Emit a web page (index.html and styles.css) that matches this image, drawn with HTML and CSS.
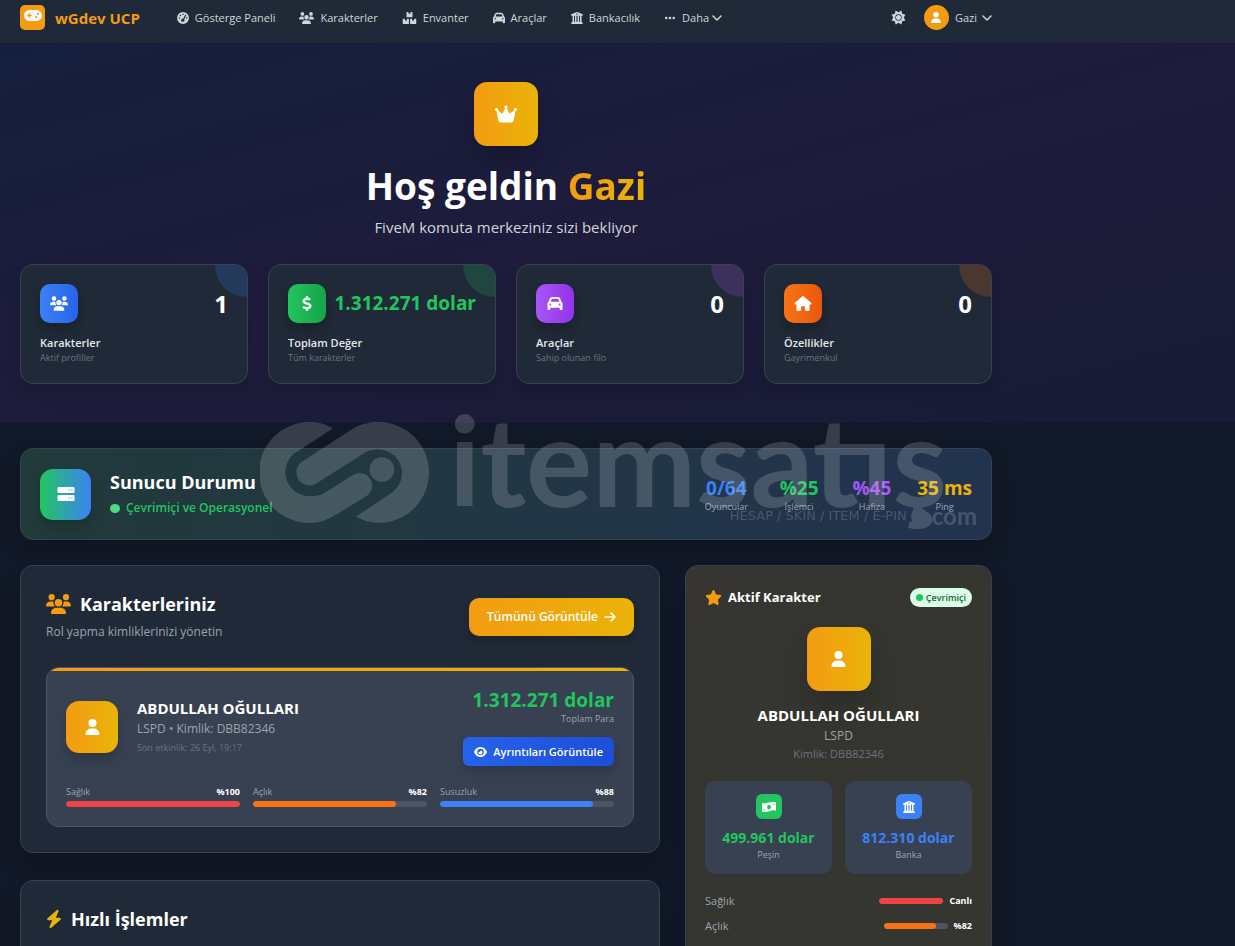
FILE: index.html
```html
<!DOCTYPE html>
<html lang="tr">
<head>
    <meta charset="UTF-8">
    <meta name="viewport" content="width=device-width, initial-scale=1.0">
    <title>wGdev UCP</title>
    <link rel="stylesheet" href="styles.css">
</head>
<body>
    <svg class="sprite" aria-hidden="true">
        <symbol id="i-user" viewBox="0 0 448 512"><path d="M224 256A128 128 0 1 0 224 0a128 128 0 1 0 0 256zm-45.7 48C79.8 304 0 383.8 0 482.3C0 498.7 13.3 512 29.7 512H418.3c16.4 0 29.7-13.3 29.7-29.7C448 383.8 368.2 304 269.7 304H178.3z"/></symbol>
        <symbol id="i-users" viewBox="0 0 640 512"><path d="M144 0a80 80 0 1 1 0 160A80 80 0 1 1 144 0zM512 0a80 80 0 1 1 0 160A80 80 0 1 1 512 0zM0 298.7C0 239.8 47.8 192 106.7 192h42.7c15.9 0 31 3.5 44.6 9.7c-1.3 7.2-1.9 14.7-1.9 22.3c0 38.2 16.8 72.5 43.3 96c-.2 0-.4 0-.7 0H21.3C9.6 320 0 310.4 0 298.7zM405.3 320c-.2 0-.4 0-.7 0c26.6-23.5 43.3-57.8 43.3-96c0-7.6-.7-15-1.9-22.3c13.6-6.3 28.7-9.7 44.6-9.7h42.7C592.2 192 640 239.8 640 298.7c0 11.8-9.6 21.3-21.3 21.3H405.3zM224 224a96 96 0 1 1 192 0 96 96 0 1 1 -192 0zM128 485.3C128 411.7 187.7 352 261.3 352H378.7C452.3 352 512 411.7 512 485.3c0 14.7-11.9 26.7-26.7 26.7H154.7c-14.7 0-26.7-11.9-26.7-26.7z"/></symbol>
        <symbol id="i-crown" viewBox="0 0 576 512"><path d="M309 106c11.4-7 19-19.7 19-34c0-22.1-17.9-40-40-40s-40 17.9-40 40c0 14.4 7.6 27 19 34L209.7 220.6c-9.1 18.2-32.7 23.4-48.6 10.7L72 160c5-6.7 8-15 8-24c0-22.1-17.9-40-40-40S0 113.9 0 136s17.9 40 40 40c.2 0 .5 0 .7 0L86.4 427.4c5.5 30.4 32 52.6 63 52.6H426.6c30.9 0 57.4-22.1 63-52.6L535.3 176c.2 0 .5 0 .7 0c22.1 0 40-17.9 40-40s-17.9-40-40-40s-40 17.9-40 40c0 9 3 17.3 8 24l-89.1 71.3c-15.9 12.7-39.5 7.5-48.6-10.7L309 106z"/></symbol>
        <symbol id="i-home" viewBox="0 0 576 512"><path d="M575.8 255.5c0 18-15 32.1-32 32.1h-32l.7 160.2V472c0 22.1-17.9 40-40 40H392c-22.1 0-40-17.9-40-40V384c0-17.7-14.3-32-32-32H256c-17.7 0-32 14.3-32 32v88c0 22.1-17.9 40-40 40H104c-22.1 0-40-17.9-40-40V287.6H32c-18 0-32-14-32-32.1c0-9 3-17 10-24L266.4 8c7-7 15-8 22-8s15 2 21 7L564.8 231.5c8 7 12 15 11 24z"/></symbol>
        <symbol id="i-car" viewBox="0 0 512 512"><path fill-rule="evenodd" d="M135.2 117.4L109.1 192H402.9l-26.1-74.6C372.3 104.6 360.2 96 346.6 96H165.4c-13.6 0-25.7 8.6-30.2 21.4zM39.6 196.8L74.8 96.3C88.3 57.8 124.6 32 165.4 32H346.6c40.8 0 77.1 25.8 90.6 64.3l35.2 100.5c23.2 9.6 39.6 32.5 39.6 59.2V448c0 17.7-14.3 32-32 32H448c-17.7 0-32-14.3-32-32V400H96v48c0 17.7-14.3 32-32 32H32c-17.7 0-32-14.3-32-32V256c0-26.7 16.4-49.6 39.6-59.2zM128 288a32 32 0 1 0 -64 0 32 32 0 1 0 64 0zm288 32a32 32 0 1 0 0-64 32 32 0 1 0 0 64z"/></symbol>
        <symbol id="i-star" viewBox="0 0 576 512"><path d="M316.9 18C311.6 7 300.4 0 288.1 0s-23.4 7-28.8 18L195 150.3 51.4 171.5c-12 1.8-22 10.2-25.7 21.7s-.7 24.2 7.9 32.7L137.8 329 113.2 474.7c-2 12 3 24.2 12.9 31.3s23 8 33.8 2.3l128.3-68.5 128.3 68.5c10.8 5.7 23.9 4.9 33.8-2.3s14.9-19.3 12.9-31.3L438.5 329 542.7 225.9c8.6-8.5 11.7-21.2 7.9-32.7s-13.7-19.9-25.7-21.7L381.2 150.3 316.9 18z"/></symbol>
        <symbol id="i-bolt" viewBox="0 0 448 512"><path d="M349.4 44.6c5.9-13.7 1.5-29.7-10.6-38.5s-28.6-8-39.9 1.8l-256 224c-10 8.8-13.6 22.9-8.9 35.3S50.7 288 64 288H175.5L98.6 467.4c-5.9 13.7-1.5 29.7 10.6 38.5s28.6 8 39.9-1.8l256-224c10-8.8 13.6-22.9 8.9-35.3s-16.6-20.7-30-20.7H272.5L349.4 44.6z"/></symbol>
        <symbol id="i-dollar" viewBox="0 0 320 512"><path stroke="currentColor" stroke-width="16" d="M160 0c17.7 0 32 14.3 32 32V67.7c1.6 .2 3.1 .4 4.7 .7c.4 .1 .7 .1 1.1 .2l48 8.8c17.4 3.2 28.9 19.9 25.7 37.2s-19.9 28.9-37.2 25.7l-47.5-8.7c-31.3-4.6-58.9-1.5-78.3 6.2s-27.2 18.3-29 28.1c-2 10.7-.5 16.7 1.2 20.4c1.8 3.9 5.5 8.3 12.8 13.2c16.3 10.7 41.3 17.7 73.7 26.3l2.9 .8c28.6 7.6 63.6 16.8 89.6 33.8c14.2 9.3 27.6 21.9 35.9 39.5c8.5 17.9 10.3 37.9 6.4 59.2c-6.9 38-33.1 63.4-65.6 76.7c-13.7 5.6-28.6 9.2-44.4 11V480c0 17.7-14.3 32-32 32s-32-14.3-32-32V445.1l-1.5-.2c-24.4-3.8-64.5-14.3-91.5-26.3c-16.1-7.2-23.4-26.1-16.2-42.2s26.1-23.4 42.2-16.2c20.9 9.3 55.3 18.5 75.2 21.6c31.9 4.7 58.2 2 76-5.3c16.9-6.9 24.6-16.9 26.8-28.9c1.9-10.6 .4-16.7-1.3-20.4c-1.9-4-5.6-8.4-13-13.3c-16.4-10.7-41.5-17.7-74-26.3l-2.8-.7C119.4 279.3 84.4 270 58.4 253c-14.2-9.3-27.5-22-35.8-39.6c-8.4-17.9-10.1-37.9-6.1-59.2C23.7 116 52.3 91.2 84.8 78.3c13.3-5.3 27.9-8.9 43.2-11V32c0-17.7 14.3-32 32-32z"/></symbol>
        <symbol id="i-gauge" viewBox="0 0 512 512"><path fill-rule="evenodd" d="M0 256a256 256 0 1 1 512 0A256 256 0 1 1 0 256zM288 96a32 32 0 1 0-64 0 32 32 0 1 0 64 0zM176 144a32 32 0 1 0-64 0 32 32 0 1 0 64 0zM128 256a32 32 0 1 0-64 0 32 32 0 1 0 64 0zM448 256a32 32 0 1 0-64 0 32 32 0 1 0 64 0zM256 416a64 64 0 0 0 52-101L391 145a24 24 0 0 0-43-21L265 293a64 64 0 1 0-9 123z"/></symbol>
        <symbol id="i-boxes" viewBox="0 0 576 512"><path d="M160 24a24 24 0 0 1 24-24h62v84l42-18 42 18V0h62a24 24 0 0 1 24 24v176a24 24 0 0 1-24 24H184a24 24 0 0 1-24-24zM0 312a24 24 0 0 1 24-24h70v84l42-18 42 18v-84h62a24 24 0 0 1 24 24v176a24 24 0 0 1-24 24H24a24 24 0 0 1-24-24zM312 312a24 24 0 0 1 24-24h62v84l42-18 42 18v-84h70a24 24 0 0 1 24 24v176a24 24 0 0 1-24 24H336a24 24 0 0 1-24-24z"/></symbol>
        <symbol id="i-bank" viewBox="0 0 512 512"><path fill-rule="evenodd" d="M240 4a36 36 0 0 1 32 0l224 96c22 10 18 60-8 60H24c-26 0-30-50-8-60zM256 56a32 32 0 1 0 0 64 32 32 0 1 0 0-64zM64 160h64v256h40V160h64v256h48V160h64v256h40V160h64v260l48 34c22 16 12 58-18 58H34c-30 0-40-42-18-58l48-34z"/></symbol>
        <symbol id="i-dots" viewBox="0 0 448 512"><path d="M8 256a56 56 0 1 1 112 0A56 56 0 1 1 8 256zm160 0a56 56 0 1 1 112 0 56 56 0 1 1-112 0zm216-56a56 56 0 1 1 0 112 56 56 0 1 1 0-112z"/></symbol>
        <symbol id="i-down" viewBox="0 0 10 10"><path d="M1 3l4 4 4-4" fill="none" stroke="currentColor" stroke-width="1.5" stroke-linecap="round" stroke-linejoin="round"/></symbol>
        <symbol id="i-arrow" viewBox="0 0 12 12"><path d="M1 6h10M7 2l4 4-4 4" fill="none" stroke="currentColor" stroke-width="1.6" stroke-linecap="round" stroke-linejoin="round"/></symbol>
        <symbol id="i-sun" viewBox="0 0 24 24"><path fill-rule="evenodd" d="M16.600 .9l1.300 5.200 5.200 1.300L20.400 12l2.700 4.600-5.200 1.300-1.300 5.200L12 20.400l-4.600 2.700-1.300-5.200-5.200-1.300L3.600 12 .9 7.400l5.200-1.300L7.400 .9 12 3.600zM12 6.900a5.100 5.100 0 1 0 0 10.200 5.100 5.100 0 1 0 0-10.200zm0 1.100a4 4 0 1 1 0 8 4 4 0 1 1 0-8z"/></symbol>
        <symbol id="i-eye" viewBox="0 0 576 512"><path fill-rule="evenodd" d="M288 32c-81 0-146 37-193 80.600C48 156 17 208 3 243.700a32 32 0 0 0 0 24.600C17 304 48 356 95 399.400 142 443 207 480 288 480s146-37 193-80.600c47-43.400 78-95.400 92-131.100a32 32 0 0 0 0-24.600c-14-35.700-45-87.700-92-131.100C434 69 369 32 288 32zM144 256a144 144 0 1 1 288 0 144 144 0 1 1-288 0zm144-64c0 35-29 64-64 64-7 0-14-1-20-3a86 86 0 1 0 81-61z"/></symbol>
        <symbol id="i-server" viewBox="0 0 18 16"><path d="M1.500 1h15a1 1 0 0 1 1 1v4a1 1 0 0 1-1 1h-15a1 1 0 0 1-1-1V2a1 1 0 0 1 1-1zM1.500 9h15a1 1 0 0 1 1 1v4a1 1 0 0 1-1 1h-15a1 1 0 0 1-1-1v-4a1 1 0 0 1 1-1z"/><path fill="#a9d5e6" d="M11.500 3h1.500v2h-1.500zM14 3h1.500v2H14zM11.500 11h1.500v2h-1.500zM14 11h1.500v2H14z"/></symbol>
        <symbol id="i-gamepad" viewBox="0 0 640 384"><path fill-rule="evenodd" d="M192 0h256a192 192 0 0 1 0 384H192A192 192 0 0 1 192 0zM168 112v56h-56v48h56v56h48v-56h56v-48h-56v-56zM432 208a40 40 0 1 0 0 80 40 40 0 1 0 0-80zM496 96a40 40 0 1 0 0 80 40 40 0 1 0 0-80z"/></symbol>
        <symbol id="i-money" viewBox="0 0 576 448"><path fill-rule="evenodd" d="M0 60c70 24 120 20 190 0S360-14 576 30v350c-80-24-130-24-200 2S190 448 0 408zM288 128c-45 0-80 42-80 96s35 96 80 96 80-42 80-96-35-96-80-96zM60 310v50h60c0-30-26-50-60-50zM516 138V88h-60c0 30 26 50 60 50z"/></symbol>
    </svg>

    <nav class="navbar">
        <div class="container navbar-inner">
            <a href="#" class="brand">
                <span class="brand-icon"><svg><use href="#i-gamepad"/></svg></span>
                wGdev UCP
            </a>
            <div class="nav-links">
                <a href="#"><svg class="icon"><use href="#i-gauge"/></svg>Gösterge Paneli</a>
                <a href="#"><svg class="icon icon-wide"><use href="#i-users"/></svg>Karakterler</a>
                <a href="#"><svg class="icon icon-wide"><use href="#i-boxes"/></svg>Envanter</a>
                <a href="#"><svg class="icon"><use href="#i-car"/></svg>Araçlar</a>
                <a href="#"><svg class="icon"><use href="#i-bank"/></svg>Bankacılık</a>
                <button type="button"><svg class="icon"><use href="#i-dots"/></svg>Daha<svg class="chevron"><use href="#i-down"/></svg></button>
            </div>
            <div class="nav-right">
                <button type="button" class="theme-toggle" aria-label="Tema"><svg><use href="#i-sun"/></svg></button>
                <button type="button" class="user-menu">
                    <span class="user-avatar"><svg><use href="#i-user"/></svg></span>
                    Gazi
                    <svg class="chevron"><use href="#i-down"/></svg>
                </button>
            </div>
        </div>
    </nav>

    <header class="hero">
        <div class="container">
            <div class="avatar avatar-lg"><svg class="crown"><use href="#i-crown"/></svg></div>
            <h1>Hoş geldin <span class="gradient-text">Gazi</span></h1>
            <p class="subtitle">FiveM komuta merkeziniz sizi bekliyor</p>
            <div class="stats">
                <div class="stat-card blue">
                    <div class="stat-top">
                        <span class="stat-icon"><svg><use href="#i-users"/></svg></span>
                        <span class="stat-value">1</span>
                    </div>
                    <h3>Karakterler</h3>
                    <p>Aktif profiller</p>
                </div>
                <div class="stat-card green">
                    <div class="stat-top">
                        <span class="stat-icon"><svg><use href="#i-dollar"/></svg></span>
                        <span class="stat-value money">1.312.271 dolar</span>
                    </div>
                    <h3>Toplam Değer</h3>
                    <p>Tüm karakterler</p>
                </div>
                <div class="stat-card purple">
                    <div class="stat-top">
                        <span class="stat-icon"><svg><use href="#i-car"/></svg></span>
                        <span class="stat-value">0</span>
                    </div>
                    <h3>Araçlar</h3>
                    <p>Sahip olunan filo</p>
                </div>
                <div class="stat-card orange">
                    <div class="stat-top">
                        <span class="stat-icon"><svg><use href="#i-home"/></svg></span>
                        <span class="stat-value">0</span>
                    </div>
                    <h3>Özellikler</h3>
                    <p>Gayrimenkul</p>
                </div>
            </div>
        </div>
    </header>

    <main class="container">
        <section class="server">
            <div class="server-icon"><svg><use href="#i-server"/></svg></div>
            <div class="server-info">
                <h2>Sunucu Durumu</h2>
                <p><span class="dot"></span>Çevrimiçi ve Operasyonel</p>
            </div>
            <div class="server-stats">
                <div><strong class="c-blue">0/64</strong><span>Oyuncular</span></div>
                <div><strong class="c-green">%25</strong><span>İşlemci</span></div>
                <div><strong class="c-purple">%45</strong><span>Hafıza</span></div>
                <div><strong class="c-yellow">35 ms</strong><span>Ping</span></div>
            </div>
            <div class="watermark" aria-hidden="true">
                <svg class="wm-logo" viewBox="0 0 506 302">
                    <path d="M218 19C195 5 172 0 148 0a151 151 0 0 0 0 302c37 0 57-12 82-26l88-54a37 37 0 0 0-38-64l-90 56c-15 7-30 8-42 8a72 72 0 0 1-33-136z"/>
                    <path d="M288 283c22 14 47 19 67 19a151 151 0 0 0 0-302c-25 0-55 5-85 25L128 117a38 38 0 0 0 40 67l152-96c10-5 25-6 35-6a71 71 0 0 1 40 129z"/>
                    <circle cx="365" cy="142" r="37"/>
                </svg>
                <div class="wm-text">
                    <span class="wm-name">itemsatış</span>
                    <span class="wm-line"><span class="wm-tag">HESAP / SKİN / ITEM / E-PIN</span><span class="wm-dot"></span><span class="wm-com">com</span></span>
                </div>
            </div>
        </section>

        <div class="columns">
            <div class="main-col">
                <section class="card">
                    <div class="card-header">
                        <div>
                            <h2><svg class="h-icon"><use href="#i-users"/></svg>Karakterleriniz</h2>
                            <p>Rol yapma kimliklerinizi yönetin</p>
                        </div>
                        <a href="#" class="btn btn-gold">Tümünü Görüntüle<svg><use href="#i-arrow"/></svg></a>
                    </div>
                    <article class="character">
                        <div class="character-top">
                            <div class="avatar"><svg class="user"><use href="#i-user"/></svg></div>
                            <div class="character-info">
                                <h3>ABDULLAH OĞULLARI</h3>
                                <p>LSPD • Kimlik: DBB82346</p>
                                <small>Son etkinlik: 26 Eyl, 19:17</small>
                            </div>
                            <div class="character-money">
                                <strong>1.312.271 dolar</strong>
                                <span>Toplam Para</span>
                                <a href="#" class="btn btn-blue"><svg><use href="#i-eye"/></svg>Ayrıntıları Görüntüle</a>
                            </div>
                        </div>
                        <div class="needs">
                            <div>
                                <div class="need-label"><span>Sağlık</span><b>%100</b></div>
                                <div class="bar"><div class="fill fill-red" style="width: 100%"></div></div>
                            </div>
                            <div>
                                <div class="need-label"><span>Açlık</span><b>%82</b></div>
                                <div class="bar"><div class="fill fill-orange" style="width: 82%"></div></div>
                            </div>
                            <div>
                                <div class="need-label"><span>Susuzluk</span><b>%88</b></div>
                                <div class="bar"><div class="fill fill-blue" style="width: 88%"></div></div>
                            </div>
                        </div>
                    </article>
                </section>

                <section class="card quick">
                    <h2><svg class="h-bolt"><use href="#i-bolt"/></svg>Hızlı İşlemler</h2>
                </section>
            </div>

            <aside class="active-card">
                <div class="active-header">
                    <h2><svg><use href="#i-star"/></svg>Aktif Karakter</h2>
                    <span class="badge">Çevrimiçi</span>
                </div>
                <div class="avatar avatar-lg"><svg class="user"><use href="#i-user"/></svg></div>
                <h3>ABDULLAH OĞULLARI</h3>
                <p class="job">LSPD</p>
                <p class="cid">Kimlik: DBB82346</p>
                <div class="wallets">
                    <div class="wallet">
                        <span class="wallet-icon bg-green"><svg><use href="#i-money"/></svg></span>
                        <strong class="c-green">499.961 dolar</strong>
                        <span>Peşin</span>
                    </div>
                    <div class="wallet">
                        <span class="wallet-icon bg-blue"><svg><use href="#i-bank"/></svg></span>
                        <strong class="c-blue">812.310 dolar</strong>
                        <span>Banka</span>
                    </div>
                </div>
                <div class="vital">
                    <span>Sağlık</span>
                    <div class="bar"><div class="fill fill-red" style="width: 100%"></div></div>
                    <b>Canlı</b>
                </div>
                <div class="vital">
                    <span>Açlık</span>
                    <div class="bar"><div class="fill fill-orange" style="width: 82%"></div></div>
                    <b>%82</b>
                </div>
            </aside>
        </div>
    </main>
</body>
</html>
```

FILE: styles.css
```css
* {
    box-sizing: border-box;
    margin: 0;
    padding: 0;
}

body {
    font-family: "Open Sans", "Noto Sans", sans-serif;
    font-size: 12px;
    background-color: #111827;
    color: #fff;
    overflow-x: hidden;
}

a {
    color: inherit;
    text-decoration: none;
}

button {
    font: inherit;
    color: inherit;
    background: none;
    border: none;
    cursor: pointer;
}

svg {
    fill: currentColor;
    flex-shrink: 0;
}

.sprite {
    display: none;
}

.container {
    max-width: 1012px;
    padding: 0 20px;
}

/* Navbar */
.navbar {
    background-color: #1f2937;
    height: 43px;
    padding-top: 5px;
}

.navbar-inner {
    display: flex;
    align-items: center;
}

.brand {
    display: flex;
    align-items: center;
    gap: 10px;
    font-size: 15px;
    font-weight: 700;
    color: #f39c12;
}

.brand-icon {
    display: flex;
    justify-content: center;
    width: 25px;
    height: 25px;
    padding-top: 5px;
    border-radius: 5px;
    background-color: #f39c12;
    color: #fff;
}

.brand-icon svg {
    width: 18px;
    height: 11px;
}

.nav-links {
    display: flex;
    align-items: center;
    gap: 24px;
    margin-left: 37px;
    font-size: 11px;
    font-weight: 500;
    color: #d1d5db;
}

.nav-links a,
.nav-links button {
    display: flex;
    align-items: center;
}

.icon {
    width: 12px;
    height: 12px;
    margin-right: 6px;
}

.icon-wide {
    width: 15px;
}

.chevron {
    width: 10px;
    height: 10px;
    margin-left: 3px;
}

.nav-right {
    display: flex;
    align-items: center;
    gap: 18px;
    margin-left: auto;
    font-size: 11px;
    font-weight: 500;
    color: #d1d5db;
}

.theme-toggle svg {
    display: block;
    width: 15px;
    height: 15px;
}

.user-menu {
    display: flex;
    align-items: center;
}

.user-menu .chevron {
    margin-left: 5px;
}

.user-avatar {
    display: flex;
    align-items: center;
    justify-content: center;
    width: 25px;
    height: 25px;
    margin-right: 6px;
    border-radius: 50%;
    background-color: #f39c12;
    color: #fff;
}

.user-avatar svg {
    width: 10px;
    height: 11px;
}

/* Hero */
.hero {
    padding: 39px 0;
    text-align: center;
    background: linear-gradient(165deg, #151f3d 0%, #1e1b3b 50%, #171b35 100%);
}

.avatar {
    display: flex;
    align-items: center;
    justify-content: center;
    width: 52px;
    height: 52px;
    border-radius: 13px;
    background: linear-gradient(90deg, #f39c12, #eab308);
    box-shadow: 0 8px 12px rgba(0, 0, 0, 0.15);
}

.avatar-lg {
    width: 64px;
    height: 64px;
    margin: 0 auto;
    box-shadow: 0 16px 24px rgba(0, 0, 0, 0.18);
}

.crown {
    width: 22px;
    height: 20px;
}

.user {
    width: 15px;
    height: 16px;
}

.hero h1 {
    margin-top: 16px;
    font-size: 37px;
    line-height: 48px;
    font-weight: 700;
}

.gradient-text {
    background: linear-gradient(90deg, #f39c12, #eab308);
    -webkit-background-clip: text;
    background-clip: text;
    color: transparent;
}

.subtitle {
    margin-top: 4px;
    font-size: 15px;
    line-height: 26px;
    color: #d1d5db;
}

.stats {
    display: grid;
    grid-template-columns: repeat(4, 1fr);
    gap: 20px;
    margin-top: 24px;
    text-align: left;
}

.stat-card {
    position: relative;
    overflow: hidden;
    height: 120px;
    padding: 19px;
    border: 1px solid #374151;
    border-radius: 13px;
    background-color: #1f2937;
    box-shadow: 0 8px 12px rgba(0, 0, 0, 0.12);
}

.stat-card::before {
    content: "";
    position: absolute;
    top: -32px;
    right: -32px;
    width: 64px;
    height: 64px;
    border-radius: 50%;
    background-color: var(--from);
    opacity: 0.2;
}

.blue { --from: #3b82f6; --to: #2563eb; }
.green { --from: #22c55e; --to: #16a34a; }
.purple { --from: #a855f7; --to: #9333ea; }
.orange { --from: #f97316; --to: #ea580c; }

.stat-top {
    display: flex;
    align-items: center;
    justify-content: space-between;
}

.stat-icon {
    display: flex;
    align-items: center;
    justify-content: center;
    width: 38px;
    height: 39px;
    border-radius: 10px;
    background: linear-gradient(90deg, var(--from), var(--to));
    box-shadow: 0 6px 10px rgba(0, 0, 0, 0.2);
}

.stat-icon svg {
    width: 18px;
    height: 15px;
}

.stat-value {
    font-size: 24px;
    line-height: 39px;
    font-weight: 700;
}

.stat-value.money {
    font-size: 19px;
    color: #22c55e;
}

.stat-card h3 {
    margin-top: 12px;
    font-size: 11px;
    line-height: 16px;
    font-weight: 600;
    color: #e5e7eb;
}

.stat-card p {
    font-size: 9px;
    line-height: 13px;
    color: #6b7280;
}

/* Server status */
.server {
    position: relative;
    display: flex;
    align-items: center;
    margin-top: 25px;
    padding: 19px;
    border: 1px solid #374151;
    border-radius: 13px;
    background: linear-gradient(90deg, #213a3a, #22334f);
    box-shadow: 0 10px 18px rgba(0, 0, 0, 0.15);
}

.server-icon {
    display: flex;
    align-items: center;
    justify-content: center;
    width: 51px;
    height: 51px;
    margin-right: 19px;
    border-radius: 13px;
    background: linear-gradient(90deg, #22c55e, #3b82f6);
    box-shadow: 0 8px 12px rgba(0, 0, 0, 0.15);
}

.server-icon svg {
    width: 18px;
    height: 16px;
}

.server-info h2 {
    font-size: 18px;
    line-height: 28px;
}

.server-info p {
    display: flex;
    align-items: center;
    gap: 6px;
    font-size: 12px;
    line-height: 24px;
    font-weight: 600;
    color: #22c55e;
}

.dot {
    width: 10px;
    height: 9px;
    border-radius: 50%;
    background-color: #4ade80;
}

.server-stats {
    display: grid;
    grid-template-columns: repeat(4, 1fr);
    gap: 18px;
    margin-left: auto;
    text-align: center;
}

.server-stats strong,
.server-stats span {
    display: block;
}

.server-stats strong {
    font-size: 19px;
    line-height: 24px;
}

.server-stats span {
    font-size: 9px;
    line-height: 13px;
    color: #9ca3af;
}

.c-blue { color: #3b82f6; }
.c-green { color: #22c55e; }
.c-purple { color: #a855f7; }
.c-yellow { color: #eab308; }

/* Watermark over the server panel */
.watermark {
    position: absolute;
    top: -27px;
    right: 14px;
    display: flex;
    gap: 20px;
    opacity: 0.16;
    pointer-events: none;
}

.wm-logo {
    width: 169px;
    height: 101px;
}

.wm-text {
    display: flex;
    flex-direction: column;
}

.wm-name {
    margin-right: 30px;
    font-family: Lato, sans-serif;
    font-size: 124px;
    line-height: 74px;
    font-weight: 700;
}

.wm-line {
    display: flex;
    align-items: center;
    justify-content: flex-end;
    gap: 4px;
    margin-top: 11px;
}

.wm-tag {
    font-family: "DejaVu Sans", sans-serif;
    font-size: 13px;
    line-height: 18px;
}

.wm-dot {
    width: 17px;
    height: 17px;
    border-radius: 50%;
    background-color: #fff;
}

.wm-com {
    font-family: Lato, sans-serif;
    font-size: 24px;
    line-height: 18px;
    font-weight: 700;
}

/* Columns */
.columns {
    display: grid;
    grid-template-columns: 1fr 307px;
    gap: 25px;
    margin-top: 25px;
}

.card {
    padding: 25px;
    border: 1px solid #374151;
    border-radius: 13px;
    background-color: #1f2937;
    box-shadow: 0 14px 20px rgba(0, 0, 0, 0.15);
}

.card h2 {
    display: flex;
    align-items: center;
    gap: 9px;
    font-size: 18px;
    line-height: 26px;
}

.h-icon {
    width: 25px;
    height: 20px;
    color: #f39c12;
}

.card-header {
    display: flex;
    align-items: center;
    justify-content: space-between;
    margin-bottom: 25px;
}

.card-header p {
    margin-top: 4px;
    font-size: 12px;
    line-height: 21px;
    color: #9ca3af;
}

.btn {
    display: inline-flex;
    align-items: center;
    gap: 6px;
    font-weight: 600;
    box-shadow: 0 6px 10px rgba(0, 0, 0, 0.15);
}

.btn-gold {
    height: 38px;
    padding: 0 18px;
    border-radius: 10px;
    font-size: 12px;
    background: linear-gradient(90deg, #f39c12, #eab308);
}

.btn-gold svg {
    width: 12px;
    height: 12px;
}

.character {
    position: relative;
    overflow: hidden;
    padding: 19px;
    border: 1px solid #4b5563;
    border-radius: 13px;
    background-color: #374151;
}

.character::before {
    content: "";
    position: absolute;
    top: 0;
    left: 0;
    right: 0;
    height: 3px;
    background: linear-gradient(90deg, #f39c12, #eab308);
}

.character-top {
    display: flex;
    align-items: center;
}

.character-info {
    margin-left: 19px;
}

.character-info h3,
.active-card h3 {
    font-size: 15px;
    line-height: 22px;
}

.character-info p {
    font-size: 12px;
    line-height: 20px;
    color: #9ca3af;
}

.character-info small {
    display: block;
    font-size: 9px;
    line-height: 18px;
    color: #6b7280;
}

.character-money {
    display: flex;
    flex-direction: column;
    align-items: flex-end;
    margin-left: auto;
}

.character-money strong {
    font-size: 19px;
    line-height: 26px;
    color: #22c55e;
}

.character-money span {
    font-size: 9px;
    line-height: 12px;
    color: #9ca3af;
}

.btn-blue {
    height: 29px;
    margin-top: 12px;
    padding: 0 11px;
    border-radius: 6px;
    font-size: 11px;
    background: linear-gradient(90deg, #2563eb, #1d4ed8);
}

.btn-blue svg {
    width: 13px;
    height: 12px;
}

.needs {
    display: grid;
    grid-template-columns: repeat(3, 1fr);
    gap: 13px;
    margin-top: 19px;
}

.need-label {
    display: flex;
    justify-content: space-between;
    margin-bottom: 3px;
    font-size: 9px;
    line-height: 13px;
    color: #9ca3af;
}

.need-label b {
    color: #fff;
}

.bar {
    height: 6px;
    border-radius: 3px;
    overflow: hidden;
    background-color: #4b5563;
}

.fill {
    height: 100%;
    border-radius: 3px;
}

.fill-red { background-color: #ef4444; }
.fill-orange { background-color: #f97316; }
.fill-blue { background-color: #3b82f6; }

.quick {
    min-height: 180px;
    margin-top: 27px;
}

.h-bolt {
    width: 16px;
    height: 20px;
    color: #eab308;
}

/* Active character */
.active-card {
    padding: 20px 19px;
    border: 1px solid #374151;
    border-radius: 13px;
    background: linear-gradient(135deg, #363531, #343630);
    box-shadow: 0 14px 20px rgba(0, 0, 0, 0.15);
    text-align: center;
}

.active-header {
    display: flex;
    align-items: center;
    justify-content: space-between;
    margin-bottom: 19px;
}

.active-header h2 {
    display: flex;
    align-items: center;
    gap: 6px;
    font-size: 13px;
    line-height: 22px;
}

.active-header svg {
    width: 17px;
    height: 15px;
    color: #f39c12;
}

.badge {
    display: flex;
    align-items: center;
    gap: 3px;
    height: 19px;
    padding: 0 6px;
    border-radius: 10px;
    font-size: 9px;
    font-weight: 600;
    background-color: #dcfce7;
    color: #166534;
}

.badge::before {
    content: "";
    width: 7px;
    height: 7px;
    border-radius: 50%;
    background-color: #22c55e;
}

.active-card h3 {
    margin-top: 13px;
}

.job {
    font-size: 12px;
    line-height: 20px;
    color: #9ca3af;
}

.cid {
    font-size: 11px;
    line-height: 16px;
    color: #6b7280;
}

.wallets {
    display: grid;
    grid-template-columns: 1fr 1fr;
    gap: 13px;
    margin: 19px 0 14px;
}

.wallet {
    display: flex;
    flex-direction: column;
    align-items: center;
    padding: 13px 6px;
    border-radius: 10px;
    background-color: #374151;
    font-size: 9px;
    line-height: 13px;
    color: #9ca3af;
}

.wallet strong {
    margin-top: 9px;
    font-size: 14px;
    line-height: 20px;
}

.wallet-icon {
    display: flex;
    align-items: center;
    justify-content: center;
    width: 26px;
    height: 25px;
    border-radius: 6px;
    color: #fff;
}

.wallet-icon svg {
    width: 14px;
    height: 12px;
}

.bg-green { background-color: #22c55e; }
.bg-blue { background-color: #3b82f6; }

.vital {
    display: flex;
    align-items: center;
    gap: 6px;
    height: 25px;
    font-size: 11px;
    color: #9ca3af;
}

.vital .bar {
    width: 64px;
    margin-left: auto;
}

.vital b {
    font-size: 9px;
    color: #fff;
}
```
